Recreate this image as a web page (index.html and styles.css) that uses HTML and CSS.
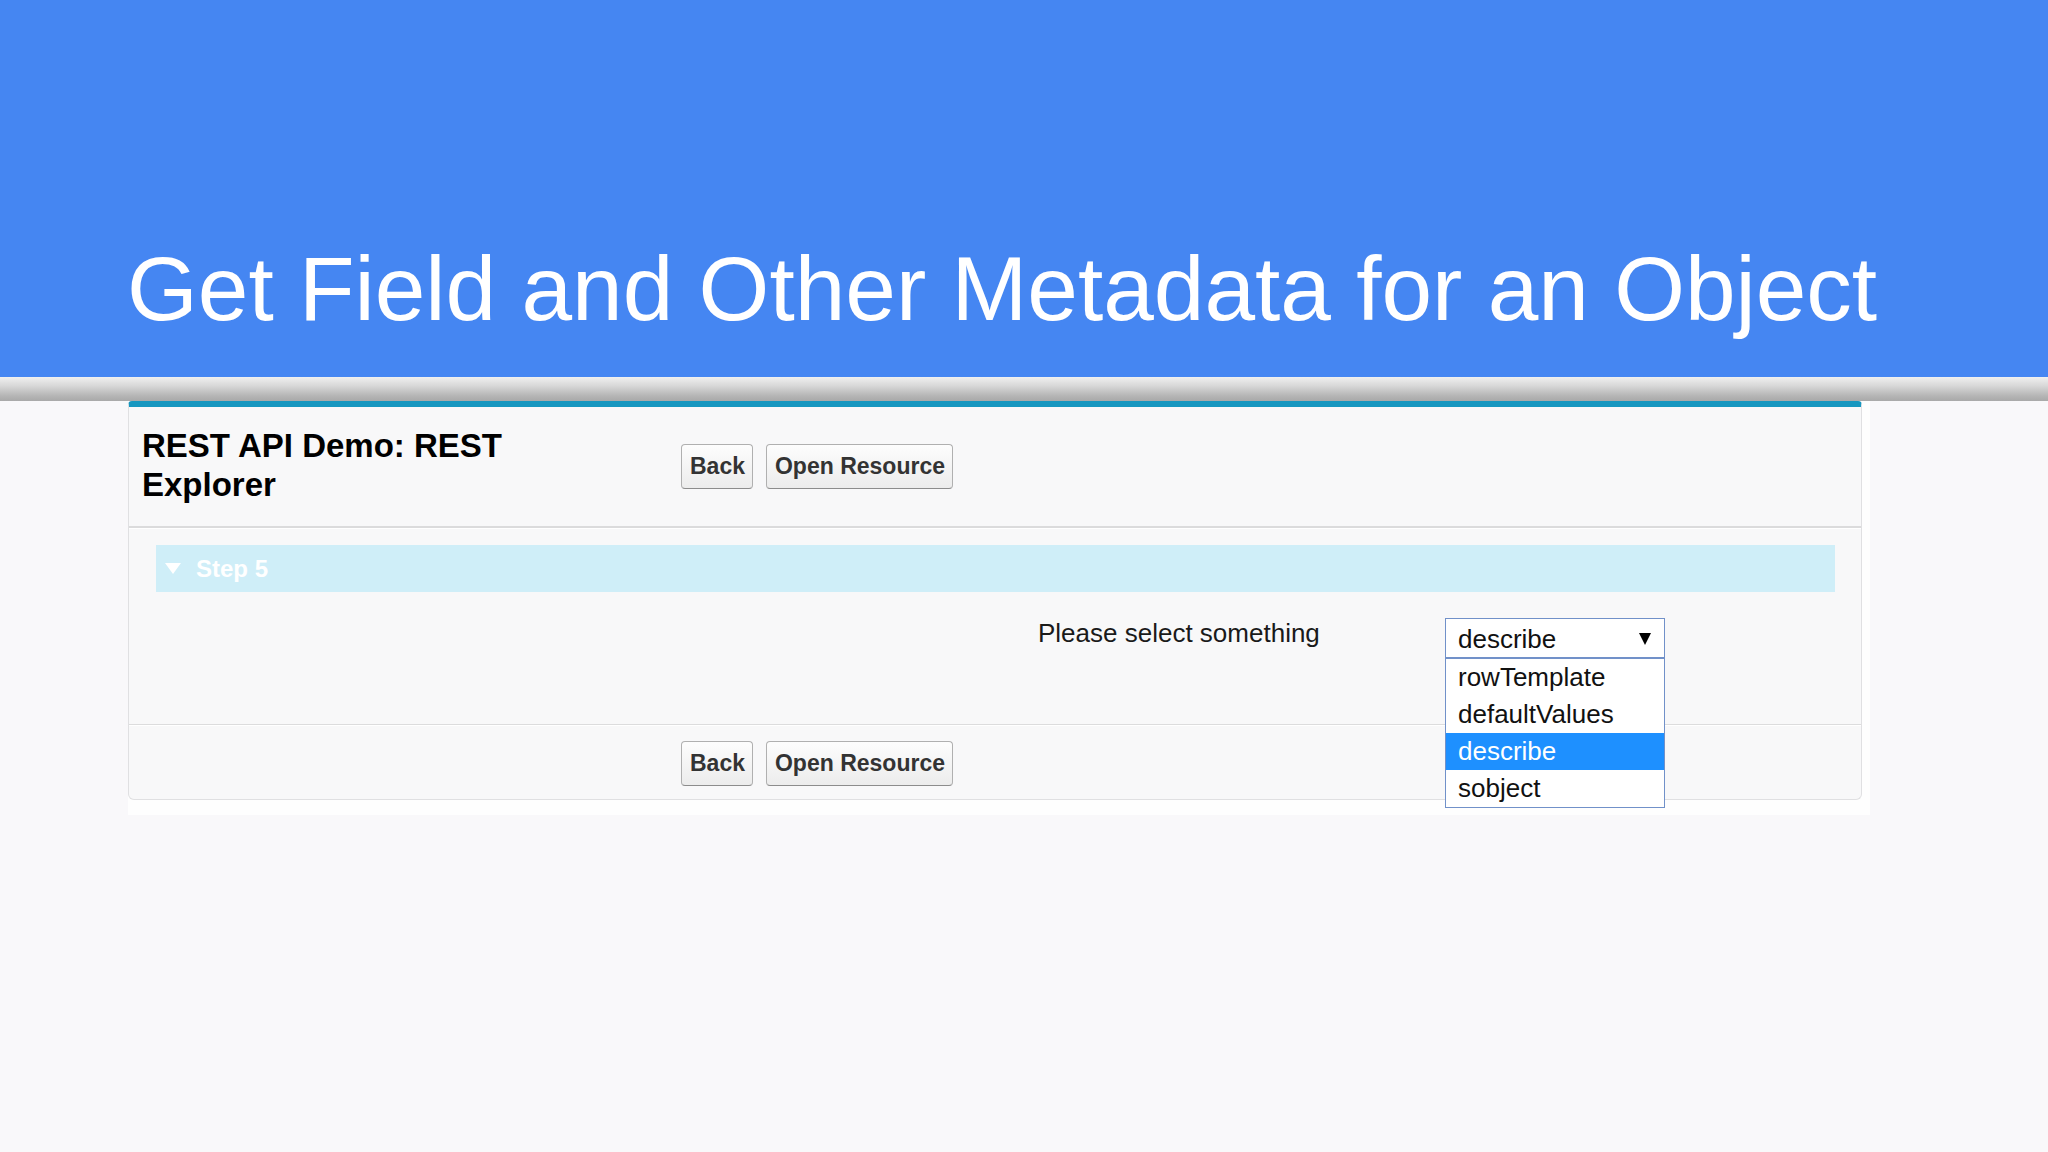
FILE: index.html
```html
<!DOCTYPE html>
<html lang="en">
<head>
<meta charset="utf-8">
<title>Get Field and Other Metadata for an Object</title>
<link rel="stylesheet" href="styles.css">
</head>
<body>
<div class="slide">
  <header class="slide-head">
    <h1 class="slide-title">Get Field and Other Metadata for an Object</h1>
  </header>
  <div class="shade"></div>
  <main class="stage">
    <div class="shot">
      <section class="panel">
        <div class="pb-head">
          <h2 class="pb-title">REST API Demo: REST Explorer</h2>
          <div class="pb-buttons">
            <button class="btn">Back</button>
            <button class="btn">Open Resource</button>
          </div>
        </div>
        <div class="pb-body">
          <div class="step"><span class="tri"></span><span class="step-text">Step 5</span></div>
          <div class="field-row">
            <span class="spacer"></span>
            <span class="label">Please select something</span>
            <div class="select-wrap">
              <div class="select"><span>describe</span><span class="arrow"></span></div>
              <ul class="options">
                <li class="opt">rowTemplate</li>
                <li class="opt">defaultValues</li>
                <li class="opt selected">describe</li>
                <li class="opt">sobject</li>
              </ul>
            </div>
          </div>
        </div>
        <div class="pb-foot">
          <div class="pb-buttons">
            <button class="btn">Back</button>
            <button class="btn">Open Resource</button>
          </div>
        </div>
      </section>
    </div>
  </main>
</div>
</body>
</html>
```

FILE: styles.css
```css
* { box-sizing: border-box; }

html, body {
  margin: 0;
  padding: 0;
  background: #f9f8fa;
  font-family: "Liberation Sans", Arial, sans-serif;
}

.slide {
  width: 2048px;
  height: 1152px;
  overflow: hidden;
  background: #f9f8fa;
}

.slide-head {
  height: 377px;
  background: #4586f2;
  padding: 243px 0 0 127px;
}

.slide-title {
  margin: 0;
  color: #ffffff;
  font-weight: normal;
  font-size: 91px;
  line-height: 92px;
  white-space: nowrap;
}

.shade {
  height: 24px;
  background: linear-gradient(#f0f0f0 0%, #d9d9d9 35%, #b4b4b4 80%, #a9a9a9 100%);
}

.stage {
  padding-left: 128px;
}

.shot {
  width: 1742px;
  background: #fefefe;
  padding: 0 8px 15px 0;
}

.panel {
  width: 1734px;
  background: #f8f8f9;
  border: 1px solid #e0e0e2;
  border-top: 6px solid #1797c0;
  border-radius: 4px 4px 6px 6px;
}

.pb-head {
  height: 121px;
  display: flex;
  align-items: center;
  padding-left: 13px;
  border-bottom: 2px solid #dbdbdc;
}

.pb-title {
  margin: 0 99px 0 0;
  padding-bottom: 3px;
  flex: 0 0 440px;
  font-size: 33px;
  line-height: 39px;
  font-weight: bold;
  color: #000000;
}

.pb-buttons {
  display: flex;
  gap: 13px;
}

.btn {
  height: 45px;
  padding: 0 7px 0 8px;
  font-family: "Liberation Sans", Arial, sans-serif;
  font-weight: bold;
  font-size: 23px;
  color: #333333;
  background: linear-gradient(#fdfdfd, #ececec);
  border: 1px solid #b0b0b0;
  border-bottom-color: #8c8c8c;
  border-radius: 4px;
}

.pb-body {
  border-top: 1px solid #ffffff;
  padding: 16px 26px 66px 27px;
}

.step {
  height: 47px;
  background: #cfeef8;
  display: flex;
  align-items: center;
  padding-left: 9px;
  gap: 15px;
}

.tri {
  width: 0;
  height: 0;
  border-left: 8.5px solid transparent;
  border-right: 8.5px solid transparent;
  border-top: 11px solid #ffffff;
}

.step-text {
  color: #ffffff;
  font-weight: bold;
  font-size: 24px;
}

.field-row {
  margin-top: 26px;
  display: grid;
  grid-template-columns: 882px 407px 220px;
  align-items: start;
}

.label {
  font-size: 26px;
  line-height: 30px;
  color: #1a1a1a;
  white-space: nowrap;
}

.select-wrap {
  position: relative;
  width: 220px;
}

.select {
  height: 40px;
  border: 1px solid #7191c9;
  background: #ffffff;
  display: flex;
  align-items: center;
  justify-content: space-between;
  padding: 2px 13px 0 12px;
  font-size: 26px;
  line-height: 36px;
  color: #111111;
}

.arrow {
  width: 0;
  height: 0;
  border-left: 6px solid transparent;
  border-right: 6px solid transparent;
  border-top: 12px solid #000000;
}

.options {
  position: absolute;
  left: 0;
  top: 40px;
  width: 220px;
  margin: 0;
  padding: 0;
  list-style: none;
  background: #ffffff;
  border: 1px solid #7191c9;
  z-index: 5;
}

.opt {
  height: 37px;
  line-height: 36px;
  padding-left: 12px;
  font-size: 26px;
  color: #111111;
}

.opt.selected {
  background: #1e90ff;
  color: #ffffff;
}

.pb-foot {
  border-top: 1px solid #dcdcdd;
  box-shadow: inset 0 1px 0 #ffffff;
  padding: 16px 0 13px 552px;
}
```
